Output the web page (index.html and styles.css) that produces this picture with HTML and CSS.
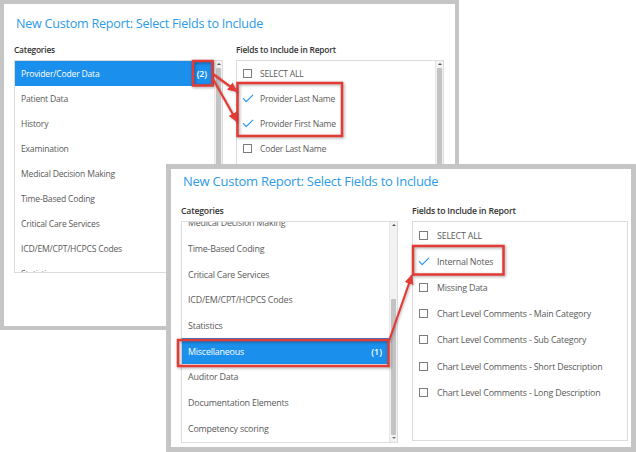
FILE: index.html
```html
<!DOCTYPE html>
<html lang="en">
<head>
  <meta charset="UTF-8" />
  <title>New Custom Report</title>
  <link rel="stylesheet" href="styles.css">
</head>
<body>
  <div class="desk">

    <!-- back window: Provider/Coder Data selected -->
    <section class="win win-back">
      <h1 class="win-title">New Custom Report: Select Fields to Include</h1>
      <div class="cols">
        <div class="col col-cats">
          <h2 class="col-label">Categories</h2>
          <div class="box">
            <ul class="list">
              <li class="item selected"><span>Provider/Coder Data</span><span class="count">(2)</span></li>
              <li class="item">Patient Data</li>
              <li class="item">History</li>
              <li class="item">Examination</li>
              <li class="item">Medical Decision Making</li>
              <li class="item">Time-Based Coding</li>
              <li class="item">Critical Care Services</li>
              <li class="item">ICD/EM/CPT/HCPCS Codes</li>
              <li class="item">Statistics</li>
              <li class="item">Miscellaneous</li>
            </ul>
            <div class="sb">
              <div class="sb-up"></div>
              <div class="sb-track"><div class="sb-thumb thumb-top"></div></div>
            </div>
          </div>
        </div>
        <div class="col col-fields">
          <h2 class="col-label">Fields to Include in Report</h2>
          <div class="box">
            <ul class="list">
              <li class="item field"><span class="tick"><span class="cb"></span></span>SELECT ALL</li>
              <li class="item field"><span class="tick"><svg width="12" height="9" viewBox="0 0 12 9"><path d="M1 4.2 L4.2 7.6 L11 0.8" /></svg></span>Provider Last Name</li>
              <li class="item field"><span class="tick"><svg width="12" height="9" viewBox="0 0 12 9"><path d="M1 4.2 L4.2 7.6 L11 0.8" /></svg></span>Provider First Name</li>
              <li class="item field"><span class="tick"><span class="cb"></span></span>Coder Last Name</li>
              <li class="item field"><span class="tick"><span class="cb"></span></span>Coder First Name</li>
              <li class="item field"><span class="tick"><span class="cb"></span></span>Coder ID</li>
            </ul>
            <div class="sb">
              <div class="sb-up"></div>
              <div class="sb-track"><div class="sb-thumb thumb-top"></div></div>
            </div>
          </div>
        </div>
      </div>
    </section>

    <!-- front window: Miscellaneous selected -->
    <section class="win win-front">
      <h1 class="win-title">New Custom Report: Select Fields to Include</h1>
      <div class="cols">
        <div class="col col-cats">
          <h2 class="col-label">Categories</h2>
          <div class="box">
            <ul class="list scrolled">
              <li class="item">Medical Decision Making</li>
              <li class="item">Time-Based Coding</li>
              <li class="item">Critical Care Services</li>
              <li class="item">ICD/EM/CPT/HCPCS Codes</li>
              <li class="item">Statistics</li>
              <li class="item selected"><span>Miscellaneous</span><span class="count">(1)</span></li>
              <li class="item">Auditor Data</li>
              <li class="item">Documentation Elements</li>
              <li class="item">Competency scoring</li>
            </ul>
            <div class="sb">
              <div class="sb-up"></div>
              <div class="sb-track"><div class="sb-thumb thumb-bottom"></div></div>
              <div class="sb-down"></div>
            </div>
          </div>
        </div>
        <div class="col col-fields">
          <h2 class="col-label">Fields to Include in Report</h2>
          <div class="box">
            <ul class="list">
              <li class="item field"><span class="tick"><span class="cb"></span></span>SELECT ALL</li>
              <li class="item field"><span class="tick"><svg width="12" height="9" viewBox="0 0 12 9"><path d="M1 4.2 L4.2 7.6 L11 0.8" /></svg></span>Internal Notes</li>
              <li class="item field"><span class="tick"><span class="cb"></span></span>Missing Data</li>
              <li class="item field"><span class="tick"><span class="cb"></span></span>Chart Level Comments - Main Category</li>
              <li class="item field"><span class="tick"><span class="cb"></span></span>Chart Level Comments - Sub Category</li>
              <li class="item field"><span class="tick"><span class="cb"></span></span>Chart Level Comments - Short Description</li>
              <li class="item field"><span class="tick"><span class="cb"></span></span>Chart Level Comments - Long Description</li>
            </ul>
          </div>
        </div>
      </div>
    </section>

    <!-- red callouts drawn over both windows -->
    <svg class="callouts" width="636" height="452" viewBox="0 0 636 452">
      <defs>
        <marker id="head" markerUnits="userSpaceOnUse" markerWidth="10" markerHeight="10" refX="9" refY="5" orient="auto">
          <path d="M0 0.5 L10 5 L0 9.5 Z" fill="#e53b36" />
        </marker>
      </defs>
      <rect x="193" y="61" width="19.5" height="24.5" />
      <rect x="237.5" y="83" width="104.5" height="53" />
      <rect x="178" y="340" width="210.5" height="26" />
      <rect x="413" y="246" width="90.5" height="28.5" />
      <line x1="213" y1="74" x2="237" y2="91.5" marker-end="url(#head)" />
      <line x1="213" y1="79" x2="237" y2="121.5" marker-end="url(#head)" />
      <line x1="389" y1="341" x2="412" y2="275" marker-end="url(#head)" />
    </svg>
  </div>
</body>
</html>
```

FILE: styles.css
```css
/* two report dialogs stacked, with red callouts on top */
* { box-sizing: border-box; }
body, html {
  margin: 0; padding: 0;
  background: #fff;
  font-family: 'Open Sans', 'Liberation Sans', sans-serif;
}
.desk {
  position: relative;
  width: 636px;
  height: 452px;
  overflow: hidden;
  background: #fff;
}
.win {
  position: absolute;
  background: #fff;
  border: 4px solid #c5c5c5;
  overflow: hidden;
}
.win-back {
  left: 0; top: 0;
  width: 459px;
  height: 330px;
  padding: 11px 11px 0 10px;
}
.win-front {
  left: 166px; top: 164px;
  width: 470px;
  height: 288px;
  border-width: 5px;
  padding: 4px 3px 0 10px;
}
.win-title {
  margin: 0 0 0 2px;
  font-size: 12.6px;
  line-height: 17px;
  font-weight: 400;
  letter-spacing: -0.25px;
  color: #2d9be8;
  white-space: nowrap;
}
.win-front .win-title { font-size: 13px; }
.cols {
  display: flex;
  gap: 13px;
  margin-top: 11px;
}
.win-front .cols { gap: 14px; margin-top: 14px; }
.col-cats { width: 209px; }
.col-fields { width: 208px; }
.win-front .col-cats { width: 217px; }
.win-front .col-fields { width: 216px; }
.col-label {
  margin: 0 0 3px 0;
  font-size: 8.4px;
  line-height: 14px;
  font-weight: 600;
  letter-spacing: -0.2px;
  color: #333;
  white-space: nowrap;
}
.win-front .col-label { font-size: 8.7px; }
.box {
  display: flex;
  height: 213px;
  border: 1px solid #dcdcdc;
  background: #fff;
}
.win-front .box { height: 222px; }
.win-front .col-fields .box { margin-top: 1px; height: 220px; }
.list {
  flex-grow: 1;
  margin: 0; padding: 0;
  list-style: none;
  overflow: hidden;
}
.item {
  display: flex;
  align-items: center;
  justify-content: space-between;
  height: 25px;
  padding: 0 7px 0 6px;
  font-size: 8.6px;
  letter-spacing: -0.2px;
  color: #5a5a5a;
  white-space: nowrap;
}
.win-front .item { height: 25.7px; font-size: 8.9px; }
.win-front .field { height: 26.2px; }
.list.scrolled .item:first-child { margin-top: -12px; }
.item.selected {
  background: #1b8fec;
  color: #fff;
}
.count { font-weight: 600; letter-spacing: 0; }
.field {
  justify-content: flex-start;
  padding-left: 5px;
}
.tick {
  display: flex;
  align-items: center;
  width: 13px;
  height: 12px;
  margin-right: 5px;
}
.win-front .tick { margin-right: 6px; }
.cb {
  display: block;
  width: 9px;
  height: 9px;
  margin-left: 1px;
  border: 1.2px solid #7c7c7c;
  background: #fff;
}
.tick svg { display: block; }
.tick path {
  fill: none;
  stroke: #2c97ee;
  stroke-width: 1.2;
}
.sb {
  display: flex;
  flex-direction: column;
  width: 8px;
  background: #f2f2f2;
  border-left: 1px solid #e8e8e8;
}
.sb-up, .sb-down {
  position: relative;
  height: 7px;
}
.sb-up::after, .sb-down::after {
  content: '';
  position: absolute;
  left: 2px; top: 2px;
  border-left: 2px solid transparent;
  border-right: 2px solid transparent;
}
.sb-up::after { border-bottom: 2.5px solid #555; }
.sb-down::after { border-top: 2.5px solid #777; }
.sb-track {
  flex-grow: 1;
  display: flex;
  flex-direction: column;
  padding: 0 1px;
}
.sb-thumb {
  background: #c3c3c3;
  border-radius: 1px;
}
.thumb-top { height: 120px; }
.thumb-bottom { margin-top: 70px; flex-grow: 1; }
.callouts {
  position: absolute;
  left: 0; top: 0;
  pointer-events: none;
}
.callouts rect {
  fill: none;
  stroke: #e53b36;
  stroke-width: 2.5;
  filter: drop-shadow(1px 1.5px 1.5px rgba(0, 0, 0, 0.35));
}
.callouts line {
  stroke: #e53b36;
  stroke-width: 2.2;
  filter: drop-shadow(1px 1px 1px rgba(0, 0, 0, 0.25));
}
```
